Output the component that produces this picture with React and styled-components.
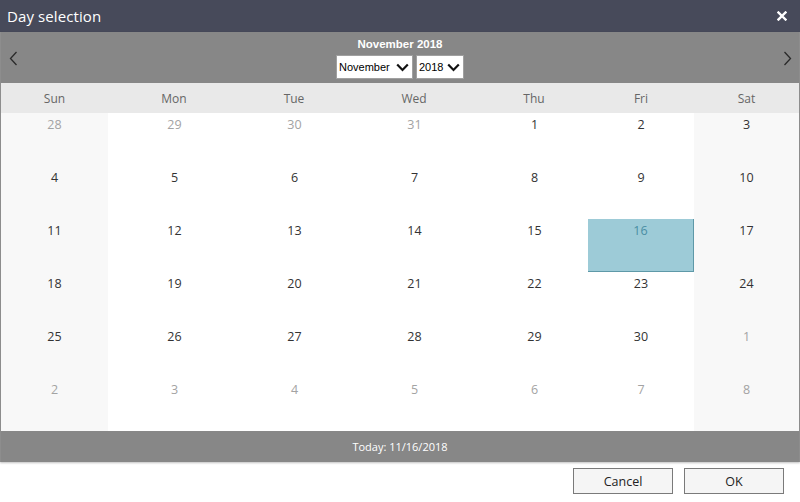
import React from 'react';
import styled, { createGlobalStyle } from 'styled-components';

const GlobalStyle = createGlobalStyle`
  html, body {
    margin: 0;
    padding: 0;
    background: #ffffff;
  }
  body {
    font-family: "Open Sans", "Noto Sans", sans-serif;
  }
`;

const Dialog = styled.div`
  width: 800px;
  height: 502px;
  display: flex;
  flex-direction: column;
  background: #ffffff;
  overflow: hidden;
`;

const TitleBar = styled.div`
  height: 32px;
  flex: none;
  display: flex;
  align-items: center;
  justify-content: space-between;
  padding: 0 13px 0 7px;
  background: #474a5a;
  color: #ffffff;
`;

const Title = styled.div`
  font-size: 15px;
  letter-spacing: 0.1px;
`;

const CloseButton = styled.div`
  display: flex;
  align-items: center;
  justify-content: center;
  width: 10px;
  height: 10px;
`;

const Calendar = styled.div`
  display: flex;
  flex-direction: column;
  border-left: 1px solid #8d8d8d;
  border-right: 1px solid #8d8d8d;
  box-shadow: 0 1px 2px rgba(0, 0, 0, 0.25);
`;

const Nav = styled.div`
  height: 51px;
  display: flex;
  align-items: center;
  justify-content: space-between;
  background: #878787;
  padding: 0 7px 0 7px;
`;

const NavArrow = styled.div`
  width: 10px;
  height: 16px;
  display: flex;
  align-items: center;
  justify-content: center;
  margin-top: 2px;
`;

const NavCenter = styled.div`
  display: flex;
  flex-direction: column;
  align-items: center;
  gap: 4px;
  padding-top: 1px;
`;

const MonthTitle = styled.div`
  font-family: "Liberation Sans", Arial, sans-serif;
  font-weight: bold;
  font-size: 11.5px;
  color: #ffffff;
  line-height: 14px;
`;

const SelectRow = styled.div`
  display: flex;
  gap: 3px;
`;

const Select = styled.div`
  width: ${(p) => p.$width}px;
  height: 24px;
  box-sizing: border-box;
  background: #ffffff;
  border: 1px solid #a0a0a0;
  display: flex;
  align-items: center;
  justify-content: space-between;
  padding: 0 3px 0 2px;
  font-family: "Liberation Sans", Arial, sans-serif;
  font-size: 11px;
  color: #000000;
`;

const Grid = styled.div`
  display: grid;
  grid-template-columns: 107px 120px 120px 120px 120px 106px 105px;
  grid-auto-rows: 53px;
`;

const HeaderRow = styled.div`
  display: grid;
  grid-template-columns: 107px 120px 120px 120px 120px 106px 105px;
  height: 30px;
  background: #e9e9e9;
`;

const HeaderCell = styled.div`
  display: flex;
  align-items: center;
  justify-content: center;
  padding-left: ${(p) => (p.$shift ? 12 : 0)}px;
  font-size: 12px;
  color: #666666;
`;

const DayCell = styled.div`
  box-sizing: border-box;
  display: flex;
  justify-content: center;
  padding-top: 3px;
  padding-left: ${(p) => (p.$shift ? 13 : 0)}px;
  font-size: 12.5px;
  background: ${(p) => (p.$selected ? '#9dcbd7' : p.$weekend ? '#f8f8f8' : '#ffffff')};
  color: ${(p) => (p.$selected ? '#4a8ea4' : p.$other ? '#a3a3a3' : '#333333')};
  border-right: ${(p) => (p.$selected ? '1px solid #5e99a8' : 'none')};
  border-bottom: ${(p) => (p.$selected ? '1px solid #5e99a8' : 'none')};
`;

const TodayBar = styled.div`
  height: 31px;
  display: flex;
  align-items: center;
  justify-content: center;
  background: #878787;
  color: #ffffff;
  font-size: 11px;
`;

const Footer = styled.div`
  display: flex;
  justify-content: flex-end;
  gap: 11px;
  padding: 6px 16px 0 0;
`;

const Button = styled.button`
  width: 100px;
  height: 26px;
  box-sizing: border-box;
  background: #f5f5f5;
  border: 1px solid #7a7a7a;
  font-family: "Open Sans", "Noto Sans", sans-serif;
  font-size: 12.5px;
  color: #222222;
  padding: 0;
`;

const Chevron = ({ dir }) => (
  <svg width="9" height="15" viewBox="0 0 9 15">
    <path
      d={dir === 'left' ? 'M7.5 1 L1.5 7.5 L7.5 14' : 'M1.5 1 L7.5 7.5 L1.5 14'}
      fill="none"
      stroke="#2a2a2a"
      strokeWidth="1.3"
    />
  </svg>
);

const DownArrow = () => (
  <svg width="13" height="9" viewBox="0 0 13 9">
    <path d="M1.2 1.5 L6.5 7 L11.8 1.5" fill="none" stroke="#111" strokeWidth="2.2" />
  </svg>
);

const CloseIcon = () => (
  <svg width="10" height="10" viewBox="0 0 10 10">
    <path d="M1.5 1.5 L8.5 8.5 M8.5 1.5 L1.5 8.5" stroke="#ffffff" strokeWidth="2.4" strokeLinecap="square" />
  </svg>
);

const weekDays = ['Sun', 'Mon', 'Tue', 'Wed', 'Thu', 'Fri', 'Sat'];

function buildDays() {
  const days = [];
  [28, 29, 30, 31].forEach((d) => days.push({ d, other: true }));
  for (let d = 1; d <= 30; d++) days.push({ d, other: false });
  for (let d = 1; d <= 8; d++) days.push({ d, other: true });
  return days;
}

export default function App() {
  const days = buildDays();
  return (
    <Dialog>
      <GlobalStyle />
      <TitleBar>
        <Title>Day selection</Title>
        <CloseButton>
          <CloseIcon />
        </CloseButton>
      </TitleBar>
      <Calendar>
        <Nav>
          <NavArrow>
            <Chevron dir="left" />
          </NavArrow>
          <NavCenter>
            <MonthTitle>November 2018</MonthTitle>
            <SelectRow>
              <Select $width={77}>
                November
                <DownArrow />
              </Select>
              <Select $width={48}>
                2018
                <DownArrow />
              </Select>
            </SelectRow>
          </NavCenter>
          <NavArrow>
            <Chevron dir="right" />
          </NavArrow>
        </Nav>
        <HeaderRow>
          {weekDays.map((w, i) => (
            <HeaderCell key={w} $shift={i >= 1 && i <= 4}>
              {w}
            </HeaderCell>
          ))}
        </HeaderRow>
        <Grid>
          {days.map((day, i) => {
            const col = i % 7;
            return (
              <DayCell
                key={i}
                $weekend={col === 0 || col === 6}
                $shift={col >= 1 && col <= 4}
                $other={day.other}
                $selected={!day.other && day.d === 16}
              >
                {day.d}
              </DayCell>
            );
          })}
        </Grid>
        <TodayBar>Today: 11/16/2018</TodayBar>
      </Calendar>
      <Footer>
        <Button>Cancel</Button>
        <Button>OK</Button>
      </Footer>
    </Dialog>
  );
}
